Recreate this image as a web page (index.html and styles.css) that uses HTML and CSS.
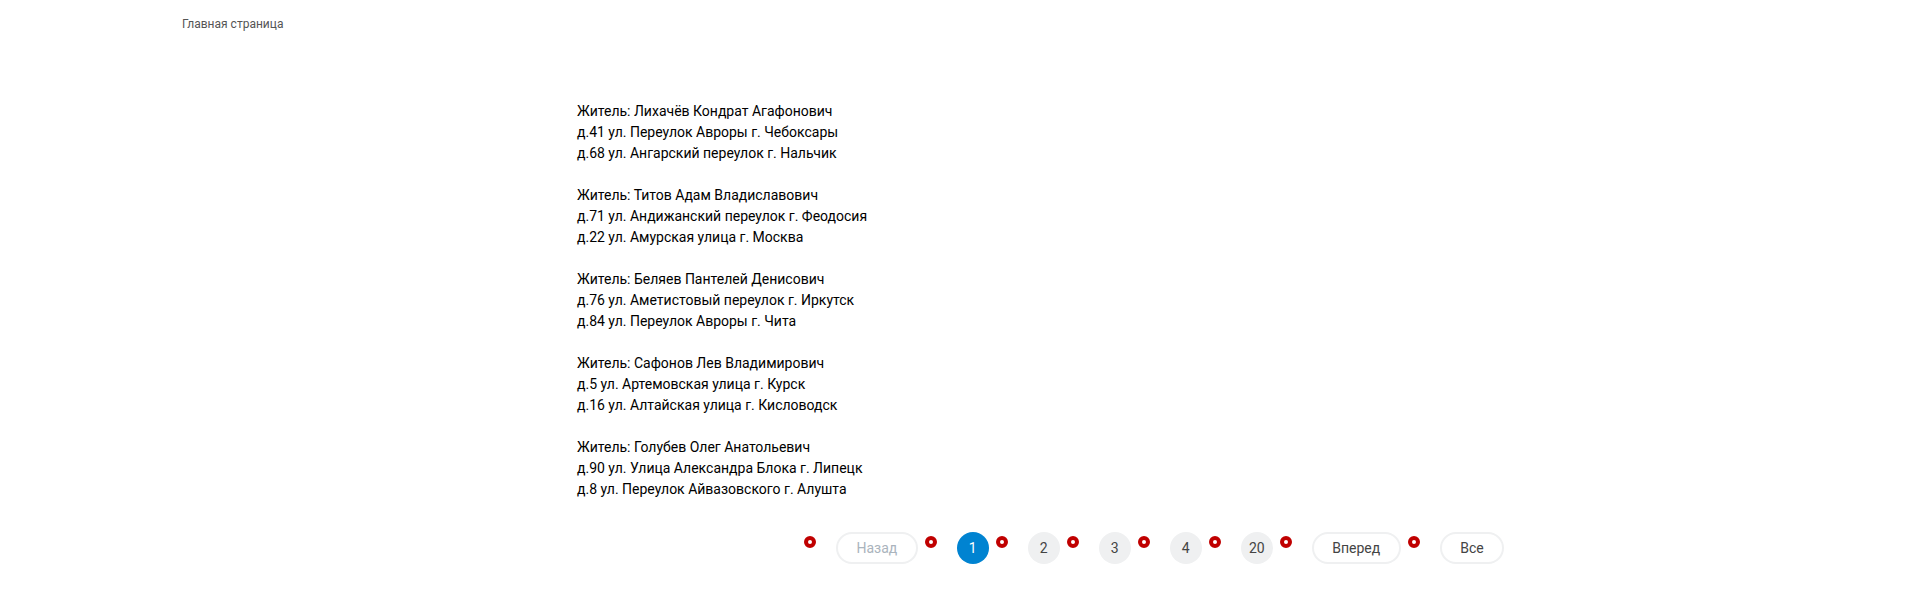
FILE: index.html
```html
<!DOCTYPE html>
<html lang="ru">
<head>
<meta charset="utf-8">
<title>Жители</title>
<link rel="stylesheet" href="styles.css">
</head>
<body>
<div class="breadcrumb">Главная страница</div>
<main class="content">
  <div class="residents">
    <p>Житель: Лихачёв Кондрат Агафонович<br>д.41 ул. Переулок Авроры г. Чебоксары<br>д.68 ул. Ангарский переулок г. Нальчик</p>
    <p>Житель: Титов Адам Владиславович<br>д.71 ул. Андижанский переулок г. Феодосия<br>д.22 ул. Амурская улица г. Москва</p>
    <p>Житель: Беляев Пантелей Денисович<br>д.76 ул. Аметистовый переулок г. Иркутск<br>д.84 ул. Переулок Авроры г. Чита</p>
    <p>Житель: Сафонов Лев Владимирович<br>д.5 ул. Артемовская улица г. Курск<br>д.16 ул. Алтайская улица г. Кисловодск</p>
    <p>Житель: Голубев Олег Анатольевич<br>д.90 ул. Улица Александра Блока г. Липецк<br>д.8 ул. Переулок Айвазовского г. Алушта</p>
  </div>
  <ul class="pagination">
    <li><span class="pill disabled">Назад</span></li>
    <li><span class="num active">1</span></li>
    <li><span class="num">2</span></li>
    <li><span class="num">3</span></li>
    <li><span class="num">4</span></li>
    <li><span class="num">20</span></li>
    <li><span class="pill">Вперед</span></li>
    <li><span class="pill">Все</span></li>
  </ul>
</main>
</body>
</html>
```
FILE: styles.css
```css
html, body {
  margin: 0;
  padding: 0;
  background: #fff;
  font-family: Roboto, "Liberation Sans", Arial, sans-serif;
}

.breadcrumb {
  padding: 16px 0 0 182px;
  font-size: 12px;
  line-height: 16px;
  color: #555;
}

.content {
  padding: 69px 0 0 577px;
}

.residents {
  font-size: 14px;
  line-height: 21px;
  color: #000;
}

.residents p {
  margin: 0 0 21px 0;
}

.residents p:last-child {
  margin-bottom: 0;
}

.pagination {
  list-style: none;
  margin: 32px 0 0 227px;
  padding: 0;
  display: flex;
  align-items: flex-start;
}

.pagination li {
  display: flex;
  align-items: flex-start;
  margin-right: 7px;
}

.pagination li::before {
  content: "";
  box-sizing: border-box;
  width: 12px;
  height: 12px;
  margin-top: 4px;
  margin-right: 20px;
  border-radius: 50%;
  border: 4px solid #c00000;
  background: #fff;
}

.pill,
.num {
  box-sizing: border-box;
  height: 32px;
  font-size: 14px;
  line-height: 28px;
  color: #444;
  display: flex;
  align-items: center;
  justify-content: center;
}

.pill {
  padding: 0 18.5px;
  border: 2px solid #eff0f1;
  border-radius: 16px;
}

.pill.disabled {
  color: #aab4bd;
}

.num {
  min-width: 32px;
  padding: 0 6px;
  border-radius: 16px;
  background: #eff0f1;
}

.num.active {
  background: #0083d1;
  color: #fff;
}
```
